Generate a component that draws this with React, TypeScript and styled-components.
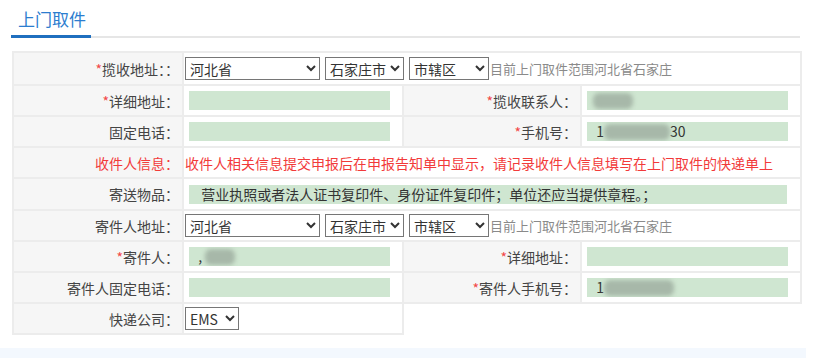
import React from 'react'
import styled, { createGlobalStyle } from 'styled-components'

const GlobalStyle = createGlobalStyle`
  body {
    margin: 0;
    background: #fff;
    font-family: "Noto Sans CJK TC", "Noto Sans CJK SC", sans-serif;
    color: #444;
  }
`

const Page = styled.div`
  width: 832px;
  height: 358px;
  overflow: hidden;
  padding-top: 7px;
  box-sizing: border-box;
`

const TabBar = styled.div`
  display: flex;
  margin-left: 11px;
  width: 789px;
  border-bottom: 2px solid #e6e6e6;
`

const Tab = styled.div`
  padding: 0 5px 4px 7px;
  margin-bottom: -2px;
  font-size: 17px;
  line-height: 24px;
  white-space: nowrap;
  color: #2c7dcf;
  border-bottom: 3px solid #1f6fbf;
`

const Table = styled.table`
  margin: 13px 0 0 12px;
  width: 788px;
  border-collapse: collapse;
  table-layout: fixed;
  font-size: 14px;
  line-height: 20px;
`

const Col = styled.col<{ $w: number }>`
  width: ${(p) => p.$w}px;
`

const Row = styled.tr<{ $h?: number }>`
  height: ${(p) => p.$h ?? 31}px;
`

const Label = styled.td`
  background: #f6f6f6;
  border: 2px solid #ececec;
  text-align: right;
  padding: 0 3px 0 0;
  white-space: nowrap;
  color: ${(p) => (p.color ? p.color : '#444')};
`

const Value = styled.td<{ $pad?: number }>`
  background: #fff;
  border: 2px solid #ececec;
  padding: 0 ${(p) => p.$pad ?? 5}px;
  white-space: nowrap;
`

const Star = styled.span`
  color: #f24848;
`

const SelectRow = styled.div`
  display: flex;
  align-items: center;
  gap: 5px;
`

const Select = styled.select<{ $w: number }>`
  width: ${(p) => p.$w}px;
  height: 23px;
  font-family: "Noto Sans CJK TC", sans-serif;
  font-size: 14px;
  color: #333;
  border: 1px solid #767676;
  border-radius: 0;
  background: #fff;
  padding: 0;
`

const Hint = styled.span`
  color: #8a8a8a;
  font-size: 13px;
  margin-left: -4px;
`

const Field = styled.div<{ $wide?: boolean }>`
  width: ${(p) => (p.$wide ? 598 : 201)}px;
  height: 19px;
  background: #cfe6d1;
  font-size: 14px;
  line-height: 19px;
  padding-left: 6px;
  box-sizing: border-box;
  color: #333;
  display: flex;
  align-items: center;
  overflow: hidden;
`

const Blur = styled.span<{ $w: number }>`
  display: inline-block;
  width: ${(p) => p.$w}px;
  height: 16px;
  background: #a7b8a9;
  filter: blur(2px);
  border-radius: 6px;
`

const Notice = styled.td`
  color: #f23a3a;
  font-size: 14px;
  border: 2px solid #ececec;
  padding: 0 1px;
  white-space: nowrap;
`

const Footer = styled.div`
  margin-top: 13px;
  width: 806px;
  height: 12px;
  background: #f3f8fe;
`

const AddressSelects: React.FC = () => (
  <SelectRow>
    <Select $w={135} defaultValue='hb'>
      <option value='hb'>河北省</option>
    </Select>
    <Select $w={79} defaultValue='sjz'>
      <option value='sjz'>石家庄市</option>
    </Select>
    <Select $w={80} defaultValue='sxq'>
      <option value='sxq'>市辖区</option>
    </Select>
    <Hint>目前上门取件范围河北省石家庄</Hint>
  </SelectRow>
)

export default function App() {
  return (
    <Page lang='zh-CN'>
      <GlobalStyle />
      <TabBar>
        <Tab>上门取件</Tab>
      </TabBar>

      <Table>
        <colgroup>
          <Col $w={170} />
          <Col $w={220} />
          <Col $w={178} />
          <Col $w={220} />
        </colgroup>
        <tbody>
          <Row $h={33}>
            <Label>
              <Star>*</Star>揽收地址：：
            </Label>
            <Value colSpan={3} $pad={1}>
              <AddressSelects />
            </Value>
          </Row>
          <Row>
            <Label>
              <Star>*</Star>详细地址：
            </Label>
            <Value>
              <Field />
            </Value>
            <Label>
              <Star>*</Star>揽收联系人：
            </Label>
            <Value>
              <Field>
                <Blur $w={40} />
              </Field>
            </Value>
          </Row>
          <Row>
            <Label>固定电话：</Label>
            <Value>
              <Field />
            </Value>
            <Label>
              <Star>*</Star>手机号：
            </Label>
            <Value>
              <Field>
                &nbsp;1
                <Blur $w={66} />
                30
              </Field>
            </Value>
          </Row>
          <Row>
            <Label color='#f23a3a'>收件人信息：</Label>
            <Notice colSpan={3}>
              收件人相关信息提交申报后在申报告知单中显示，请记录收件人信息填写在上门取件的快递单上
            </Notice>
          </Row>
          <Row $h={32}>
            <Label>寄送物品：</Label>
            <Value colSpan={3}>
              <Field $wide>
                &nbsp;&nbsp;营业执照或者法人证书复印件、身份证件复印件；单位还应当提供章程。；
              </Field>
            </Value>
          </Row>
          <Row>
            <Label>寄件人地址：</Label>
            <Value colSpan={3} $pad={1}>
              <AddressSelects />
            </Value>
          </Row>
          <Row>
            <Label>
              <Star>*</Star>寄件人：
            </Label>
            <Value>
              <Field>
                &nbsp;,&nbsp;
                <Blur $w={30} />
              </Field>
            </Value>
            <Label>
              <Star>*</Star>详细地址：
            </Label>
            <Value>
              <Field />
            </Value>
          </Row>
          <Row>
            <Label>寄件人固定电话：</Label>
            <Value>
              <Field />
            </Value>
            <Label>
              <Star>*</Star>寄件人手机号：
            </Label>
            <Value>
              <Field>
                &nbsp;1
                <Blur $w={70} />
              </Field>
            </Value>
          </Row>
          <Row>
            <Label>快递公司：</Label>
            <Value $pad={1}>
              <Select $w={54} defaultValue='ems'>
                <option value='ems'>EMS</option>
              </Select>
            </Value>
          </Row>
        </tbody>
      </Table>

      <Footer />
    </Page>
  )
}
